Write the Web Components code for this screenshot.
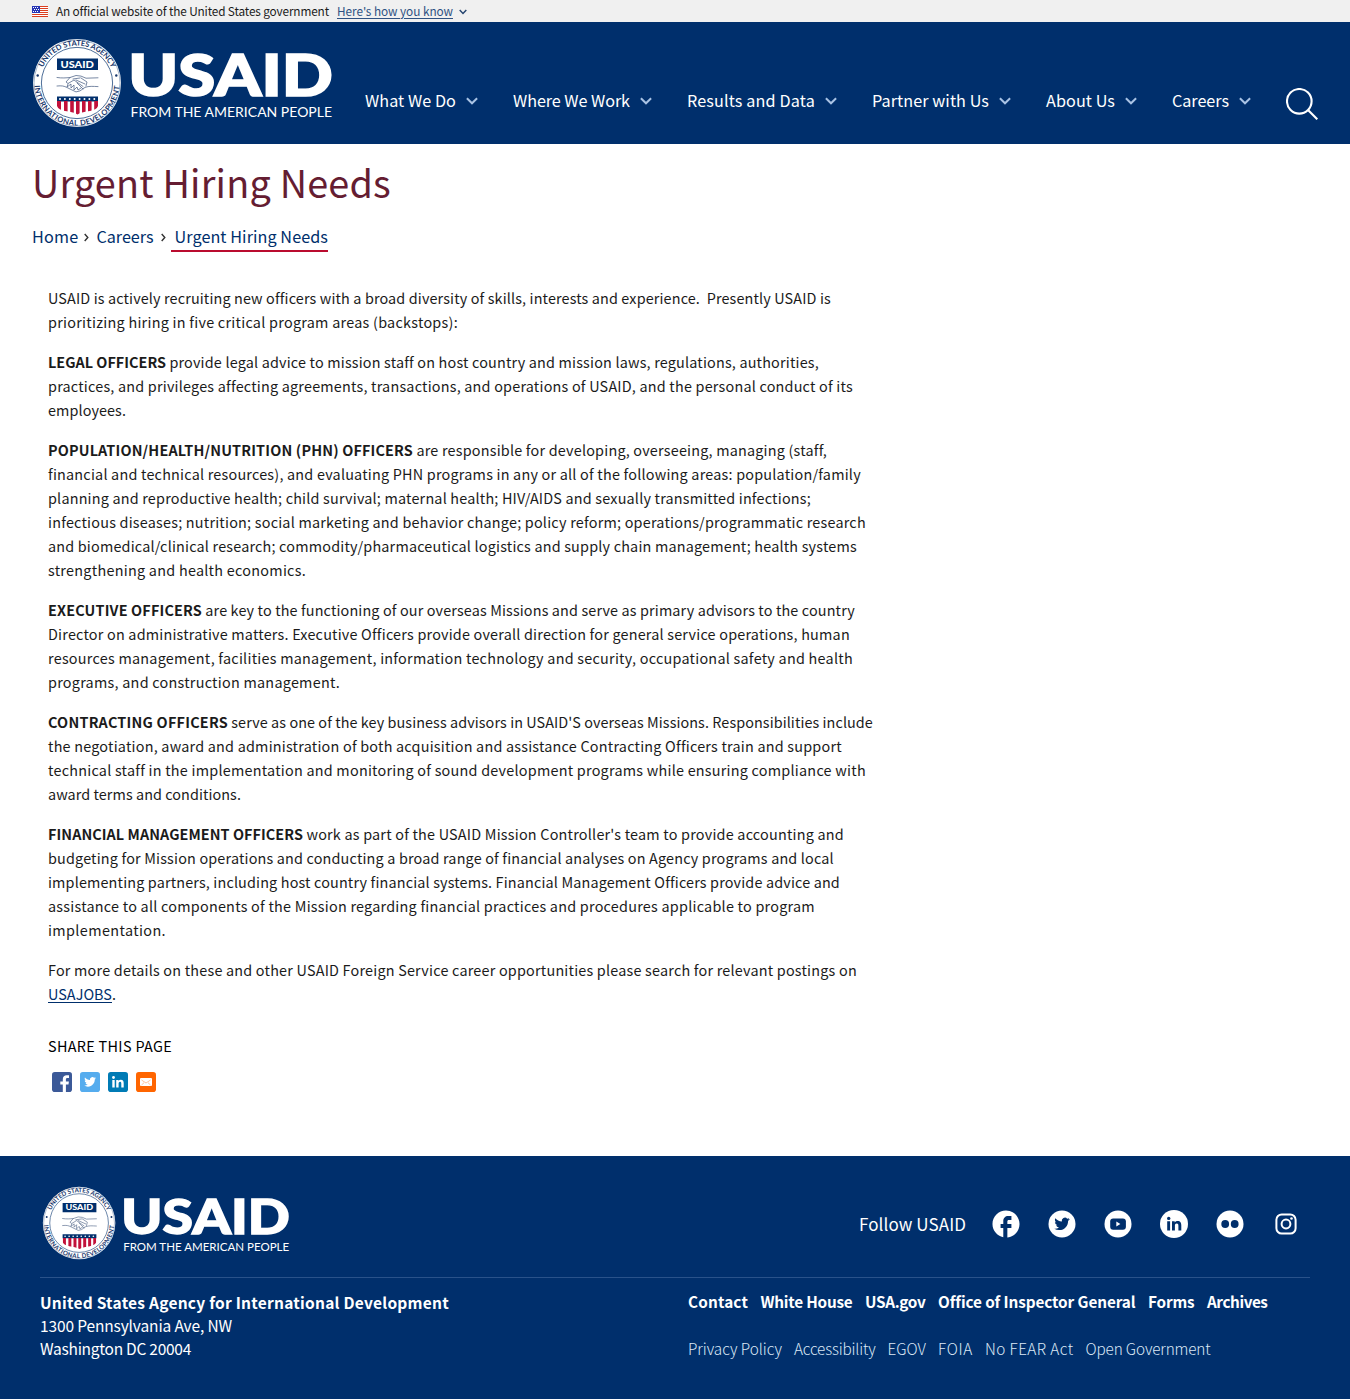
<!DOCTYPE html>
<html lang="en">
<head>
<meta charset="utf-8">
<title>Urgent Hiring Needs</title>
<style>
html,body{margin:0;padding:0;background:#fff}
body{font-family:"Noto Sans CJK JP","Source Sans Pro","Open Sans",sans-serif;color:#1b1b1b;font-size:14.4px;line-height:24px}
</style>
</head>
<body>
<usa-page></usa-page>
<script>
function define(name, html, after){
  const t=document.createElement('template');t.innerHTML=html;
  customElements.define(name,class extends HTMLElement{
    constructor(){super();this.attachShadow({mode:'open'}).appendChild(t.content.cloneNode(true));}
    connectedCallback(){if(after)after.call(this,this.shadowRoot);}
  });
}

/* Text set to a fixed measure by adjusting its tracking */
define('fit-text','<style>:host{display:inline-block;white-space:pre;vertical-align:baseline}span{display:inline-block}:host([underline]) span{text-decoration:underline;text-decoration-thickness:1px;text-underline-offset:2px}</style><span><slot></slot></span>',function(r){
  const w=+this.getAttribute('w'),s=r.querySelector('span'),n=this.textContent.length;
  this.style.width=w+'px';
  s.style.letterSpacing='0.001px';
  s.style.letterSpacing=((w-s.getBoundingClientRect().width)/n).toFixed(4)+'px';
});

define('usaid-logo',`<style>:host{display:block}svg{display:block;width:100%;height:auto;overflow:visible}</style>
<svg viewBox="32 38 301 90" role="img">
<defs><path id="top" d="M39.6 83a37.4 37.4 0 0 1 74.8 0"/><path id="bot" d="M34.4 83a42.6 42.6 0 0 0 85.2 0"/></defs>
<circle cx="77" cy="83" r="44" fill="#fff"/>
<circle cx="77" cy="83" r="43" fill="none" stroke="#002f6c" stroke-width=".35"/>
<circle cx="77" cy="83" r="35.6" fill="none" stroke="#002f6c" stroke-width=".7"/>
<g font-family="Lato,sans-serif" font-weight="700" fill="#17376c" font-size="7.5">
<text><textPath href="#top" startOffset="16" textLength="86" lengthAdjust="spacing">UNITED STATES AGENCY</textPath></text>
<text><textPath href="#bot" startOffset="2.5" textLength="128" lengthAdjust="spacing">INTERNATIONAL DEVELOPMENT</textPath></text></g>
<circle cx="37.7" cy="75.5" r="1.2" fill="#17376c"/><circle cx="116.3" cy="75.5" r="1.2" fill="#17376c"/>
<path fill="#002f6c" d="M57 58.5h41V70H57z"/>
<text x="60.5" y="67.6" font-family="Lato,sans-serif" font-weight="900" font-size="10" fill="#fff" textLength="33.5" lengthAdjust="spacingAndGlyphs">USAID</text>
<g fill="none" stroke="#4c6285" stroke-width=".75" stroke-linecap="round">
<path d="M57 77.5c5 .8 9 .4 13 0l6-2 5 .6 5 2.1 12-.4M57 86c5-.5 7 0 10 1.5l4 2 5 2.4 4-1 5-3.5c4-1.5 8-1 13-.8"/>
<path d="M70 77.5l-4 4.5 2 1.5 6-3.5 9 6.5M76 80l9 4M68 84l-1 3 4-3 0 4 3-3 0 5 3-3 1 3 3-2M81 78l6 4-1 4M73 79l7-1M77 83l6 6"/></g>
<path fill="#002f6c" d="M57 96.500h41v5H57z"/>
<clipPath id="sh"><path d="M57 101h41v5c-1 3-4 4-8 5-5 1-9 1-12.500 3.500C74 112 70 112 65 111c-4-1-7-2-8-5z"/></clipPath>
<g clip-path="url(#sh)" fill="#c2113a"><path d="M57 101h4v14h-4zM64 101h3.600v14H64zM70.200 101h3.600v14h-3.600zM76 101h3.600v14H76zM82 101h3.600v14H82zM88 101h3.600v14H88zM94.200 101H98v14h-3.800z"/></g>
<g fill="#fff"><circle cx="60" cy="99" r="1"/><circle cx="64.900" cy="99" r="1"/><circle cx="69.800" cy="99" r="1"/><circle cx="74.700" cy="99" r="1"/><circle cx="79.600" cy="99" r="1"/><circle cx="84.500" cy="99" r="1"/><circle cx="89.400" cy="99" r="1"/><circle cx="94.300" cy="99" r="1"/></g>
<text x="128.300" y="96.300" font-family="Lato,sans-serif" font-weight="900" font-size="57.500" fill="#fff" stroke="#fff" stroke-width="1.700" textLength="204.500" lengthAdjust="spacingAndGlyphs">USAID</text>
<text x="130.500" y="116.500" font-family="Lato,sans-serif" font-size="14.200" fill="#fff" textLength="201.500" lengthAdjust="spacingAndGlyphs">FROM THE AMERICAN PEOPLE</text>
</svg>`);

define('gov-banner',`<style>:host{display:flex;align-items:center;height:22px;padding-left:32px;background:#f0f0f0;font-size:11.8px;line-height:20px}
svg{display:block}.flag{margin-right:8px}a{color:#2f5283;margin-left:8px}.c{margin-left:6px;margin-top:2px}fit-text{height:21px}</style>
<svg class="flag" width="16" height="11" viewBox="0 0 16 11"><path fill="#fff" d="M0 0h16v11H0z"/><path stroke="#db3e1f" d="M0 .500h16M0 2.500h16M0 4.500h16M0 6.500h16M0 8.500h16M0 10.500h16"/><path fill="#2735b5" d="M0 0h8v7H0z"/><g fill="#fff"><path d="M1 1h1v1H1zM3 1h1v1H3zM5 1h1v1H5zM2 3h1v1H2zM4 3h1v1H4zM6 3h1v1H6zM1 5h1v1H1zM3 5h1v1H3zM5 5h1v1H5z"/></g></svg>
<fit-text w="273">An official website of the United States government</fit-text>
<a><fit-text w="116" underline>Here's how you know</fit-text></a>
<svg class="c" width="8" height="6" viewBox="0 0 8 6"><path d="M.700 1l3.300 3.400L7.300 1" fill="none" stroke="#24446f" stroke-width="1.500"/></svg>`);

define('nav-item',`<style>:host{display:flex;align-items:center;gap:10px;color:#fff;font-size:16.200px}svg{display:block;margin-top:1px}fit-text{margin-top:-1px}</style>
<fit-text></fit-text><svg width="12" height="8" viewBox="0 0 12 8"><path d="M.900 1.200L6 6.300l5.100-5.100" fill="none" stroke="#a9c3e4" stroke-width="2"/></svg>`,function(r){
  const f=document.createElement('fit-text');f.textContent=this.textContent;f.setAttribute('w',this.getAttribute('w'));r.querySelector('fit-text').replaceWith(f);});

define('site-header',`<style>:host{display:flex;box-sizing:border-box;height:122px;padding:16px 32px 0;background:#002f6c;align-items:flex-start}
usaid-logo{width:301px;margin-right:32px}nav{display:flex;gap:35px;align-items:center;margin-top:49px;height:32px}
nav-item{margin-top:-5px}svg{display:block;margin-top:2px}</style>
<usaid-logo></usaid-logo><nav>
<nav-item w="91">What We Do</nav-item><nav-item w="117">Where We Work</nav-item><nav-item w="128">Results and Data</nav-item><nav-item w="117">Partner with Us</nav-item><nav-item w="69">About Us</nav-item><nav-item w="57">Careers</nav-item>
<svg width="32" height="32" viewBox="0 0 32 32"><g fill="none" stroke="#fff" stroke-width="2.100"><circle cx="13.300" cy="13.300" r="12.300"/><path d="M22 22l9.300 9.300"/></g></svg></nav>`);

define('page-heading',`<style>:host{display:block;padding:13px 32px 0}h1{margin:0 0 17px;height:50px;font-size:37.800px;font-weight:400;line-height:50px;color:#651d32}
nav{display:flex;font-size:16.200px;line-height:24px;color:#002f6c;height:28px}svg{display:block;margin:9px 8px 0 5px}
.cur{box-sizing:border-box;height:28px;border-bottom:2px solid #ba0c2f;padding-left:4px}.s2{margin:9px 5px 0 7px}</style>
<h1><fit-text w="359">Urgent Hiring Needs</fit-text></h1>
<nav><fit-text w="46.500">Home</fit-text><svg width="5" height="9" viewBox="0 0 5 9"><path d="M.700 1l3.100 3.500L.700 8" fill="none" stroke="#333" stroke-width="1.400"/></svg><fit-text w="57">Careers</fit-text><svg class="s2" width="5" height="9" viewBox="0 0 5 9"><path d="M.700 1l3.100 3.500L.700 8" fill="none" stroke="#333" stroke-width="1.400"/></svg><span class="cur"><fit-text w="153.500">Urgent Hiring Needs</fit-text></span></nav>`);

/* Lines are [text, width] pairs; a third value is the bold lead-in with its width */
const copy=[
[["USAID is actively recruiting new officers with a broad diversity of skills, interests and experience.\u00a0 Presently USAID is",783],["prioritizing hiring in five critical program areas (backstops):",410]],
[[" provide legal advice to mission staff on host country and mission laws, regulations, authorities,",653,"LEGAL OFFICERS",118],["practices, and privileges affecting agreements, transactions, and operations of USAID, and the personal conduct of its",805],["employees.",78]],
[[" are responsible for developing, overseeing, managing (staff,",414,"POPULATION/HEALTH/NUTRITION (PHN) OFFICERS",365],["financial and technical resources), and evaluating PHN programs in any or all of the following areas: population/family",813],["planning and reproductive health; child survival; maternal health; HIV/AIDS and sexually transmitted infections;",763],["infectious diseases; nutrition; social marketing and behavior change; policy reform; operations/programmatic research",818],["and biomedical/clinical research; commodity/pharmaceutical logistics and supply chain management; health systems",809],["strengthening and health economics.",258]],
[[" are key to the functioning of our overseas Missions and serve as primary advisors to the country",653,"EXECUTIVE OFFICERS",154],["Director on administrative matters. Executive Officers provide overall direction for general service operations, human",802],["resources management, facilities management, information technology and security, occupational safety and health",805],["programs, and construction management.",292]],
[[" serve as one of the key business advisors in USAID'S overseas Missions. Responsibilities include",645,"CONTRACTING OFFICERS",180],["the negotiation, award and administration of both acquisition and assistance Contracting Officers train and support",794],["technical staff in the implementation and monitoring of sound development programs while ensuring compliance with",818],["award terms and conditions.",193]],
[[" work as part of the USAID Mission Controller's team to provide accounting and",541,"FINANCIAL MANAGEMENT OFFICERS",255],["budgeting for Mission operations and conducting a broad range of financial analyses on Agency programs and local",786],["implementing partners, including host country financial systems. Financial Management Officers provide advice and",792],["assistance to all components of the Mission regarding financial practices and procedures applicable to program",767],["implementation.",118]],
[["For more details on these and other USAID Foreign Service career opportunities please search for relevant postings on",809]]];

define('hiring-article',`<style>:host{display:block;padding:34px 48px 0}p{margin:0 0 16px}.l{display:flex;height:24px}b{font-weight:700}a{color:#002f6c}p:last-child{margin:0}</style>`,function(r){
  const fit=(t,w)=>{const f=document.createElement('fit-text');f.setAttribute('w',w);f.textContent=t;return f;};
  copy.forEach((lines,i)=>{const p=document.createElement('p');
    lines.forEach(([t,w,b,bw])=>{const d=document.createElement('div');d.className='l';
      if(b){const e=document.createElement('b');e.append(fit(b,bw));d.append(e);}
      d.append(fit(t,w));p.append(d);});
    if(i===copy.length-1){const d=document.createElement('div');d.className='l';const u=document.createElement('a');const f=fit('USAJOBS',64);f.setAttribute('underline','');u.append(f);d.append(u,fit('.',3));p.append(d);}
    r.append(p);});
});

const bird='M23.953 4.57a10 10 0 01-2.825.775 4.958 4.958 0 002.163-2.723c-.951.555-2.005.959-3.127 1.184a4.92 4.92 0 00-8.384 4.482C7.69 8.095 4.067 6.13 1.64 3.162a4.822 4.822 0 00-.666 2.475c0 1.71.87 3.213 2.188 4.096a4.904 4.904 0 01-2.228-.616v.06a4.923 4.923 0 003.946 4.827 4.996 4.996 0 01-2.212.085 4.936 4.936 0 004.604 3.417 9.867 9.867 0 01-6.102 2.105c-.39 0-.779-.023-1.17-.067a13.995 13.995 0 007.557 2.209c9.053 0 13.998-7.496 13.998-13.985 0-.21 0-.42-.015-.63A9.935 9.935 0 0024 4.59z';

define('share-links',`<style>:host{display:block;padding:28px 48px 64px;color:#000}div{display:flex;gap:8px;margin:14px 4px 0}fit-text{display:block;height:24px}svg{display:block}</style>
<fit-text w="124">SHARE THIS PAGE</fit-text><div>
<svg width="20" height="20" viewBox="0 0 20 20"><rect width="20" height="20" rx="2.800" fill="#3b5998"/><path fill="#fff" d="M10.800 20v-7.500H8.300V9.600h2.500V7.300c0-2.700 1.600-4.100 4-4.100 1 0 1.900.1 2.200.1v2.600h-1.500c-1.300 0-1.600.7-1.600 1.600v2.100h3l-.4 2.900h-2.600V20z"/></svg>
<svg width="20" height="20" viewBox="0 0 20 20"><rect width="20" height="20" rx="2.800" fill="#55acee"/><path transform="translate(4.200 4) scale(.49)" fill="#fff" d="${bird}"/></svg>
<svg width="20" height="20" viewBox="0 0 20 20"><rect width="20" height="20" rx="2.800" fill="#007bb5"/><path fill="#fff" d="M4.300 8h2.400v7.600H4.300zM8.200 8h2.300v1c.5-.8 1.300-1.200 2.300-1.200 2.300 0 2.900 1.500 2.900 3.500v4.300h-2.400v-3.800c0-1 0-2-1.200-2s-1.500 1-1.500 2v3.800H8.200z"/><circle cx="5.500" cy="5.500" r="1.400" fill="#fff"/></svg>
<svg width="20" height="20" viewBox="0 0 20 20"><rect width="20" height="20" rx="2.800" fill="#ff6500"/><rect x="4" y="6" width="12" height="8" rx="1" fill="#fff"/><path d="M5.500 8l4.500 3 4.500-3M5.500 13l2.500-2.300M14.500 13L12 10.700" stroke="#ff9a59" fill="none" stroke-width=".6"/></svg></div>`);

define('social-links',`<style>:host{display:flex;gap:28px}svg{display:block;width:28px;height:28px}</style>
<svg viewBox="1.650 1.650 20.700 20.700"><path fill="#fff" d="M22 12c0-5.520-4.480-10-10-10S2 6.480 2 12c0 4.840 3.440 8.870 8 9.800V15H8v-3h2V9.500C10 7.570 11.570 6 13.500 6H16v3h-2c-.55 0-1 .45-1 1v2h3v3h-3v6.950c5.050-.5 9-4.760 9-9.950z"/></svg>
<svg viewBox="0 0 28 28"><circle cx="14" cy="14" r="13.500" fill="#fff"/><path transform="translate(6.300 6.200) scale(.64)" fill="#002f6c" d="${bird}"/></svg>
<svg viewBox="0 0 28 28"><circle cx="14" cy="14" r="13.500" fill="#fff"/><rect x="6.200" y="8.400" width="15.700" height="11.300" rx="3" fill="#002f6c"/><path fill="#fff" d="M12.300 11.600v4.800l4.100-2.400z"/></svg>
<svg viewBox="0 0 28 28"><circle cx="14" cy="14" r="14" fill="#fff"/><g fill="#002f6c"><circle cx="8.700" cy="8.400" r="1.700"/><path d="M7.200 11.200h2.900v9.300H7.200zM12 11.200h2.700v1.300c.6-1 1.600-1.500 2.900-1.500 2.900 0 3.700 1.900 3.700 4.400v5.100h-2.900v-4.600c0-1.200-.1-2.500-1.700-2.500s-1.800 1.200-1.800 2.500v4.600H12z"/></g></svg>
<svg viewBox="0 0 28 28"><circle cx="14" cy="14" r="13.500" fill="#fff"/><circle cx="9.200" cy="14" r="3.900" fill="#002f6c"/><circle cx="18.700" cy="14" r="3.900" fill="#002f6c"/></svg>
<svg viewBox="0 0 28 28"><g fill="none" stroke="#fff" stroke-width="2"><rect x="4.400" y="4.400" width="19.200" height="19.200" rx="5.300"/><circle cx="14" cy="14" r="4.400"/></g><circle cx="19.500" cy="8.500" r="1.300" fill="#fff"/></svg>`);

define('site-footer',`<style>:host{display:block;box-sizing:border-box;height:243px;background:#002f6c;color:#fff;padding:30px 40px 0}
.top{display:flex;justify-content:space-between;height:91px;border-bottom:1px solid #29528a}usaid-logo{width:248px;margin-left:2px}
.follow{display:flex;align-items:flex-start;gap:26px;margin:24px 10px 0 0;font-size:17px}.follow fit-text{margin-top:2px}
.bot{display:flex}address{font-style:normal;width:648px;padding-top:13px;font-size:15.500px;line-height:23px}address div{height:23px}
.links{padding-top:11px;font-size:15.300px}.row{display:flex;height:47px}.b{font-weight:700}.n{font-weight:300;color:#dce8f6}</style>
<div class="top"><usaid-logo></usaid-logo><div class="follow"><fit-text w="107">Follow USAID</fit-text><social-links></social-links></div></div>
<div class="bot"><address><div class="b"><fit-text w="409">United States Agency for International Development</fit-text></div><div><fit-text w="192">1300 Pennsylvania Ave, NW</fit-text></div><div><fit-text w="151">Washington DC 20004</fit-text></div></address>
<div class="links"><div class="row b" style="gap:12.500px"><fit-text w="60">Contact</fit-text><fit-text w="92">White House</fit-text><fit-text w="60.500">USA.gov</fit-text><fit-text w="197.500">Office of Inspector General</fit-text><fit-text w="46.500">Forms</fit-text><fit-text w="60.500">Archives</fit-text></div>
<div class="row n" style="gap:12px"><fit-text w="94">Privacy Policy</fit-text><fit-text w="81.500">Accessibility</fit-text><fit-text w="38.500">EGOV</fit-text><fit-text w="35">FOIA</fit-text><fit-text w="88.500">No FEAR Act</fit-text><fit-text w="125">Open Government</fit-text></div></div></div>`);

define('usa-page',`<style>:host{display:block;height:1399px}</style><gov-banner></gov-banner><site-header></site-header><main><page-heading></page-heading><hiring-article></hiring-article><share-links></share-links></main><site-footer></site-footer>`);
</script>
</body>
</html>
